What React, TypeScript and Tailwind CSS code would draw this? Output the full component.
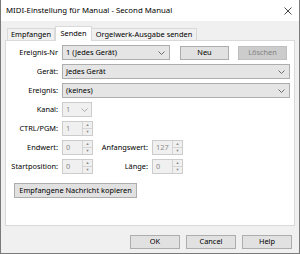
import React from "react";

function Chevron({ color = "#606060" }: { color?: string }) {
  return (
    <svg width="7" height="4" viewBox="0 0 7 4" className="shrink-0">
      <path d="M0.5 0.5 L3.5 3.5 L6.5 0.5" fill="none" stroke={color} strokeWidth="0.9" />
    </svg>
  );
}

function Combo({ value, className }: { value: string; className: string }) {
  return (
    <div
      className={`flex h-[15px] items-center justify-between border border-[#adadad] bg-[#e5e5e5] pl-[3px] pr-[4px] text-black ${className}`}
    >
      <span>{value}</span>
      <Chevron />
    </div>
  );
}

function Spinner({ value, className }: { value: string; className: string }) {
  return (
    <div className={`flex h-[15px] border border-[#cccccc] bg-[#f0f0f0] ${className}`}>
      <span className="flex-1 pl-[3px] leading-[13px] text-[#8a8a8a]">{value}</span>
      <div className="flex w-[10px] flex-col border-l border-[#d4d4d4]">
        <div className="flex flex-1 items-center justify-center border-b border-[#d4d4d4] text-[4px] leading-none text-[#8a8a8a]">
          ▲
        </div>
        <div className="flex flex-1 items-center justify-center text-[4px] leading-none text-[#8a8a8a]">▼</div>
      </div>
    </div>
  );
}

function Btn({ label, className, disabled }: { label: string; className: string; disabled?: boolean }) {
  return (
    <div
      className={`flex h-[14px] items-center justify-center border ${
        disabled ? "border-[#bfbfbf] bg-[#cccccc] text-[#838383]" : "border-[#adadad] bg-[#e1e1e1] text-black"
      } ${className}`}
    >
      {label}
    </div>
  );
}

export default function App() {
  return (
    <div className="flex h-[254px] w-[300px] flex-col whitespace-nowrap border border-t-0 border-[#7a7a7a] bg-[#f0f0f0] font-['Noto_Sans',sans-serif] text-[7.4px] leading-none text-black">
      <div className="flex h-[21px] shrink-0 items-center justify-between bg-white pl-[5px] pr-[7px]">
        <span className="text-[7.8px]">MIDI-Einstellung für Manual - Second Manual</span>
        <svg width="8" height="8" viewBox="0 0 8 8">
          <path d="M0.5 0.5 L7.5 7.5 M7.5 0.5 L0.5 7.5" stroke="#333" strokeWidth="0.9" />
        </svg>
      </div>

      <div className="flex h-[19px] items-end pl-[6px]">
        <div className="flex h-[12px] w-[48px] items-center justify-center border border-b-0 border-[#d9d9d9] bg-[#f0f0f0]">
          Empfangen
        </div>
        <div className="relative z-10 -mb-px flex h-[15px] w-[37px] items-center justify-center border border-b-0 border-[#d9d9d9] bg-white">
          Senden
        </div>
        <div className="flex h-[12px] w-[105px] items-center justify-center border border-b-0 border-l-0 border-[#d9d9d9] bg-[#f0f0f0]">
          Orgelwerk-Ausgabe senden
        </div>
      </div>

      <div className="mx-[4px] flex h-[186px] flex-col gap-[4px] border border-[#d9d9d9] bg-white pt-[4px] pr-[4px]">
        <div className="flex items-center">
          <span className="w-[52px] text-right">Ereignis-Nr</span>
          <Combo value="1 (Jedes Gerät)" className="ml-[4px] w-[108px]" />
          <Btn label="Neu" className="ml-[10px] w-[49px]" />
          <Btn label="Löschen" className="ml-[9px] w-[49px]" disabled />
        </div>
        <div className="flex items-center">
          <span className="w-[52px] text-right">Gerät:</span>
          <Combo value="Jedes Gerät" className="ml-[4px] flex-1" />
        </div>
        <div className="flex items-center">
          <span className="w-[52px] text-right">Ereignis:</span>
          <Combo value="(keines)" className="ml-[4px] flex-1" />
        </div>
        <div className="flex items-center">
          <span className="w-[52px] text-right">Kanal:</span>
          <div className="ml-[4px] flex h-[15px] w-[30px] items-center justify-between border border-[#cccccc] bg-[#f0f0f0] pl-[3px] pr-[3px] text-[#8a8a8a]">
            <span>1</span>
            <Chevron color="#a0a0a0" />
          </div>
        </div>
        <div className="flex items-center">
          <span className="w-[52px] text-right">CTRL/PGM:</span>
          <Spinner value="1" className="ml-[4px] w-[31px]" />
        </div>
        <div className="flex items-center">
          <span className="w-[52px] text-right">Endwert:</span>
          <Spinner value="0" className="ml-[4px] w-[31px]" />
          <span className="w-[55px] text-right">Anfangswert:</span>
          <Spinner value="127" className="ml-[4px] w-[31px]" />
        </div>
        <div className="flex items-center">
          <span className="w-[52px] text-right">Startposition:</span>
          <Spinner value="0" className="ml-[4px] w-[31px]" />
          <span className="w-[55px] text-right">Länge:</span>
          <Spinner value="0" className="ml-[4px] w-[31px]" />
        </div>
        <div className="mt-[5px] flex pl-[8px]">
          <Btn label="Empfangene Nachricht kopieren" className="h-[15px] w-[123px]" />
        </div>
      </div>

      <div className="mt-[9px] flex justify-end gap-[6px] pr-[7px]">
        <Btn label="OK" className="h-[13px] w-[50px]" />
        <Btn label="Cancel" className="h-[13px] w-[50px]" />
        <Btn label="Help" className="h-[13px] w-[50px]" />
      </div>
    </div>
  );
}
